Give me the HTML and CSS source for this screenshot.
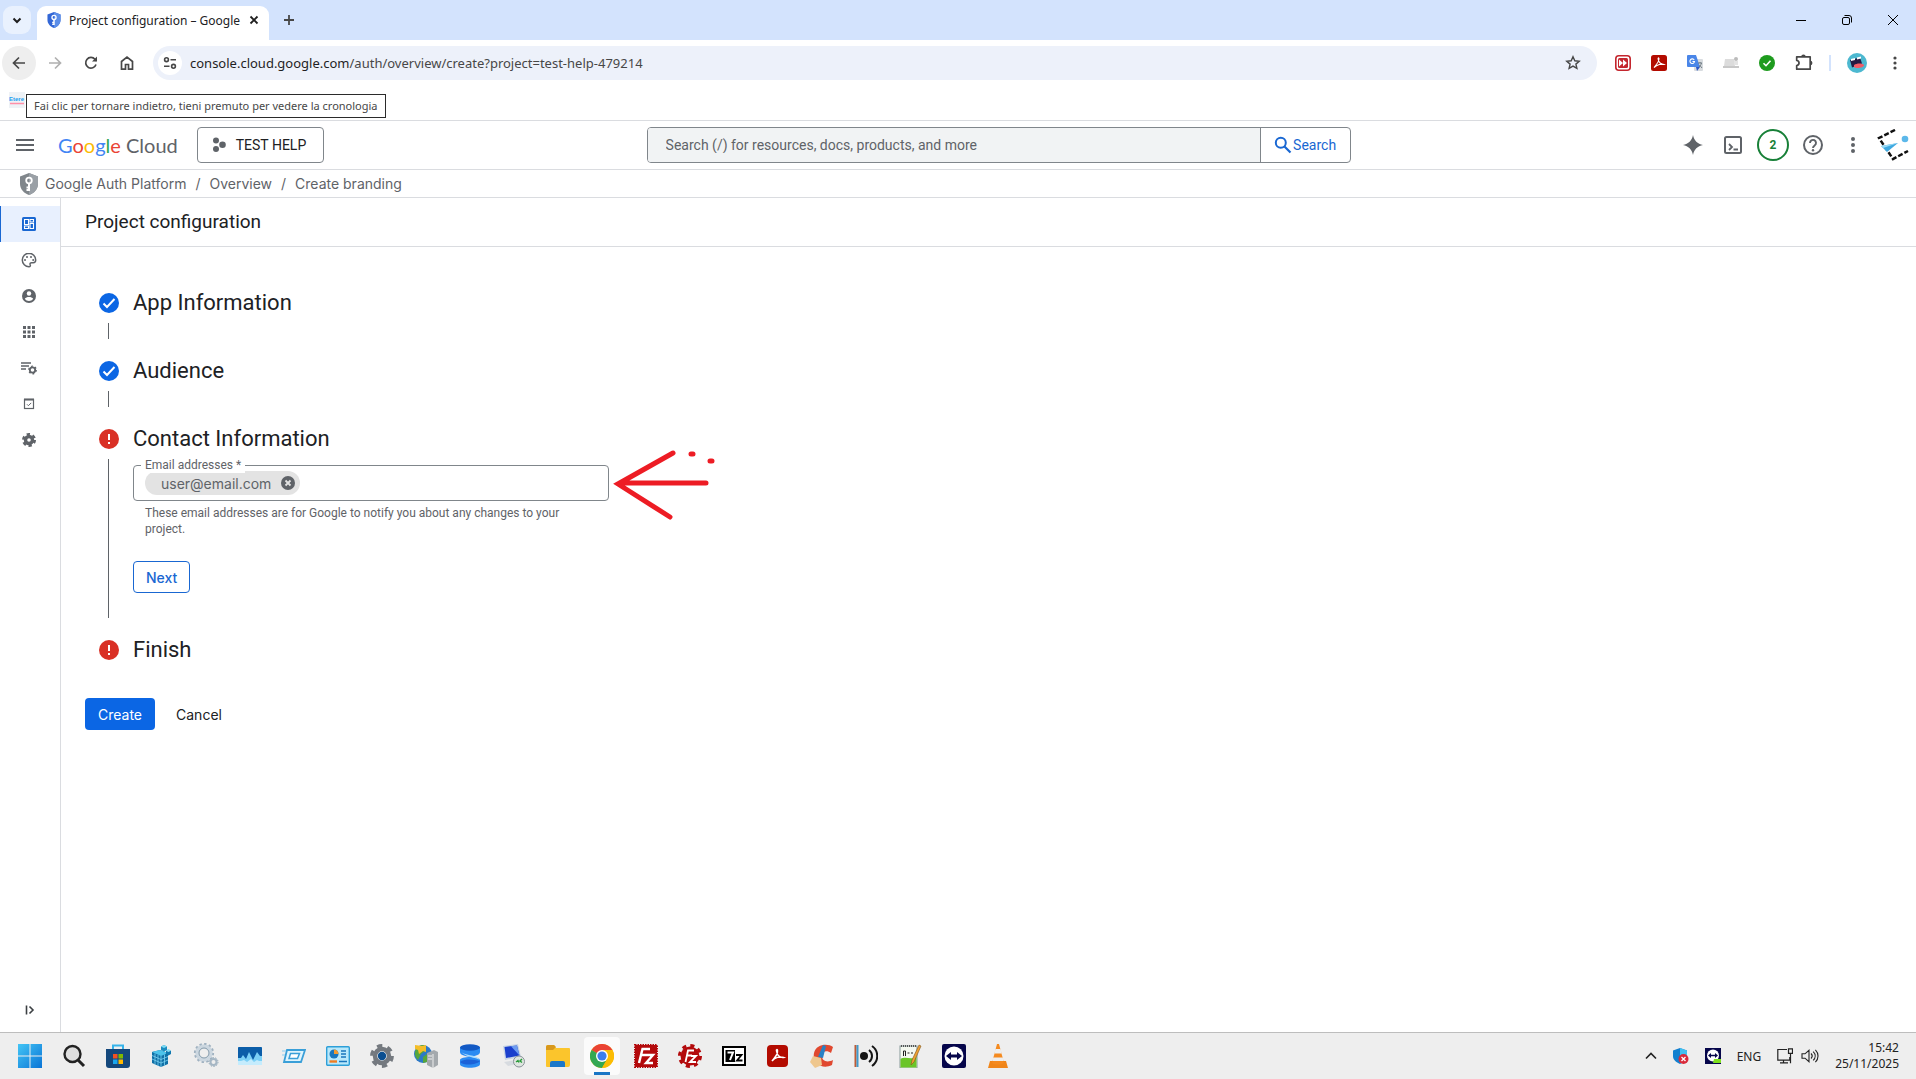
FILE: index.html
```html
<!DOCTYPE html>
<html lang="en">

<head>
    <meta charset="UTF-8">
    <meta name="viewport" content="width=device-width, initial-scale=1.0">
    <title>Project configuration</title>
    <link rel="stylesheet" href="styles.css">
</head>

<body>

    <!-- browser tabs -->
    <div class="tabstrip">
        <button class="tab-search" aria-label="Search tabs"><svg width="12" height="12" viewBox="0 0 12 12"><path d="M2.5 4.5 6 8l3.5-3.5" fill="none" stroke="#1f1f1f" stroke-width="2"/></svg></button>
        <div class="tab">
            <svg width="14" height="16" viewBox="0 0 18 22"><path d="M9 0l9 3.5V11c0 5-4 9.500-9 11-5-1.500-9-6-9-11V3.500z" fill="#3367d6"/><path d="M9 0l9 3.500V11c0 5-4 9.500-9 11z" fill="#5c8ee8"/><circle cx="9" cy="7.500" r="2.800" fill="none" stroke="#fff" stroke-width="1.800"/><path d="M9 10v8M9 14.500H6.500M9 17H6.500" stroke="#fff" stroke-width="2"/></svg>
            <span class="tab-title">Project configuration – Google</span>
            <button class="tab-close" aria-label="Close tab"><svg width="10" height="10" viewBox="0 0 10 10"><path d="M1.500 1.500l7 7M8.500 1.500l-7 7" stroke="#1f1f1f" stroke-width="1.800"/></svg></button>
        </div>
        <button class="tab-new" aria-label="New tab"><svg width="12" height="12" viewBox="0 0 12 12"><path d="M6 1v10M1 6h10" stroke="#474747" stroke-width="1.800"/></svg></button>
        <div class="window-buttons">
            <button aria-label="Minimize"><svg width="12" height="12" viewBox="0 0 12 12"><path d="M1 6.500h10" stroke="#000"/></svg></button>
            <button aria-label="Restore"><svg width="12" height="12" viewBox="0 0 12 12"><rect x="1.500" y="3.500" width="7" height="7" rx="1.500" fill="none" stroke="#000"/><path d="M3.500 1.500H8A2.500 2.500 0 0 1 10.500 4v4.500" fill="none" stroke="#000"/></svg></button>
            <button aria-label="Close"><svg width="12" height="12" viewBox="0 0 12 12"><path d="M1 1l10 10M11 1L1 11" stroke="#000"/></svg></button>
        </div>
    </div>

    <!-- address bar -->
    <div class="toolbar">
        <div class="nav-buttons">
            <button class="nav-button hovered" aria-label="Back" aria-describedby="back-tip"><svg width="16" height="16" viewBox="0 0 16 16"><path d="M14 8H3M8 2.500L2.500 8 8 13.500" fill="none" stroke="#474747" stroke-width="1.700"/></svg></button>
            <button class="nav-button" aria-label="Forward"><svg width="16" height="16" viewBox="0 0 16 16"><path d="M2 8h11M8 2.500L13.500 8 8 13.500" fill="none" stroke="#b0b0b0" stroke-width="1.700"/></svg></button>
            <button class="nav-button" aria-label="Reload"><svg width="16" height="16" viewBox="0 0 16 16"><path d="M13 9.500A5.300 5.300 0 1 1 12 4.300L13.500 6" fill="none" stroke="#474747" stroke-width="1.700"/><path d="M14 1.500v5H9z" fill="#474747"/></svg></button>
            <button class="nav-button" aria-label="Home"><svg width="16" height="16" viewBox="0 0 16 16"><path d="M2.500 14.200V6.500L8 2.200l5.500 4.300v7.700h-4V9.500h-3v4.700z" fill="none" stroke="#474747" stroke-width="1.700"/></svg></button>
        </div>
        <div class="omnibox">
            <span class="site-info"><svg width="14" height="14" viewBox="0 0 14 14"><g fill="none" stroke="#474747" stroke-width="1.600"><circle cx="3.500" cy="3.700" r="1.900"/><path d="M7.500 3.700H13M1 10.300h5.500"/><circle cx="10.500" cy="10.300" r="1.900"/></g></svg></span>
            <span class="url">console.cloud.google.com<span class="url-path">/auth/overview/create?project=test-help-479214</span></span>
            <svg width="16" height="16" viewBox="0 0 16 16"><path d="M8 1.800l1.800 4 4.400.4-3.300 2.900 1 4.300L8 11.100l-3.900 2.300 1-4.300L1.800 6.200l4.400-.4z" fill="none" stroke="#474747" stroke-width="1.400"/></svg>
        </div>
        <div class="extensions">
            <svg width="16" height="16" viewBox="0 0 16 16"><rect x=".8" y=".8" width="14.400" height="14.400" rx="3" fill="#fff" stroke="#c4262e" stroke-width="1.600"/><rect x="3" y="3" width="10" height="10" rx="1.500" fill="#c4262e"/><path d="M4 4.500L8 8l-4 3.500zM8 4.500L12 8l-4 3.500z" fill="#fff"/></svg>
            <svg width="16" height="16" viewBox="0 0 16 16"><rect width="16" height="16" rx="2.500" fill="#b30b00"/><path d="M3 12.500c2-3 5-5 5-8.500 0-1.500-1-1.500-.9 0C7.500 7 10 9.800 13 9.500 11 8.500 6 9.500 3 12.500z" fill="none" stroke="#fff" stroke-width="1.100"/></svg>
            <svg width="16" height="16" viewBox="0 0 16 16"><rect x="7" y="4" width="9" height="12" rx="1" fill="#d8dce0"/><path d="M1 0h8l4 12H1a1 1 0 0 1-1-1V1a1 1 0 0 1 1-1z" fill="#4a86e8"/><path d="M9 12h4l-3 4z" fill="#2a56c6"/><path d="M7.200 5A2.300 2.300 0 1 0 7.500 6.500H5.500" fill="none" stroke="#fff" stroke-width="1.100"/><path d="M11 8h4M13 7v1M14.500 8c-.5 2-1.500 3-2.500 4M12.500 10l2.500 3" stroke="#68737c" stroke-width=".9" fill="none"/></svg>
            <svg width="16" height="16" viewBox="0 0 16 16"><path d="M2 4h9l1 7H1z" fill="#dcdcdc"/><path d="M0 11h16v2H0z" fill="#c8c8c8"/><path d="M11 6h4v4h-4z" fill="#e4e4e4"/><circle cx="13" cy="4" r="2" fill="#bbb"/></svg>
            <svg width="16" height="16" viewBox="0 0 16 16"><circle cx="8" cy="8" r="8" fill="#1e9b1e"/><path d="M4.500 8.200L7 10.700l4.500-5" fill="none" stroke="#fff" stroke-width="1.600"/></svg>
            <svg width="18" height="18" viewBox="0 0 16 16"><path d="M1.500 2.500h12v11h-12v-3.300c2.800-.4 2.800-4 0-4.400z" fill="none" stroke="#474747" stroke-width="1.500" stroke-linejoin="round"/><path d="M5.500 2.500a2 2 0 0 1 4 0zM13.500 6a2 2 0 0 1 0 4z" fill="#474747"/></svg>
            <span class="separator"></span>
            <svg width="20" height="20" viewBox="0 0 20 20"><circle cx="10" cy="10" r="10" fill="#4cb8d0"/><path d="M3 7l10-2.500 2 6-10 4z" fill="#231942"/><path d="M4 6l4-1v2L4 8zM10 4.500l4-1v2l-4 1z" fill="#fff"/><path d="M7 12c3-2 8-2 10 0 0 3-8 4-10 2z" fill="#f05a66"/></svg>
            <button class="icon-button" aria-label="Browser menu"><svg width="16" height="16" viewBox="0 0 16 16"><g fill="#474747"><circle cx="8" cy="3" r="1.600"/><circle cx="8" cy="8" r="1.600"/><circle cx="8" cy="13" r="1.600"/></g></svg></button>
        </div>
    </div>

    <!-- bookmarks -->
    <div class="bookmarks">
        <a class="bookmark" href="#" aria-label="Etere"><svg width="16" height="16" viewBox="0 0 16 16"><rect width="16" height="16" fill="#eef2f6"/><text x="0" y="9" class="bookmark-text">Etere</text><path d="M1 11.500h14" stroke="#ff8fa8" stroke-width="1.500"/></svg></a>
        <div class="tooltip" id="back-tip" role="tooltip">Fai clic per tornare indietro, tieni premuto per vedere la cronologia</div>
    </div>

    <!-- cloud console header -->
    <header class="header">
        <div class="header-left">
            <button class="icon-button" aria-label="Navigation menu"><svg width="18" height="12" viewBox="0 0 18 12"><path d="M0 1h18M0 6h18M0 11h18" stroke="#5f6368" stroke-width="2"/></svg></button>
            <a class="logo" href="#"><span class="g-blue">G</span><span class="g-red">o</span><span class="g-yellow">o</span><span class="g-blue">g</span><span class="g-green">l</span><span class="g-red">e</span> Cloud</a>
            <button class="project-button"><svg width="14" height="16" viewBox="0 0 14 16"><g fill="#5f6368"><circle cx="4" cy="3.500" r="3"/><circle cx="4" cy="12" r="3"/><circle cx="10.500" cy="7.700" r="3.300"/></g></svg>TEST HELP</button>
        </div>
        <form class="search">
            <input type="text" class="search-input" aria-label="Search" placeholder="Search (/) for resources, docs, products, and more">
            <button type="button" class="search-button"><svg width="18" height="18" viewBox="0 0 18 18"><circle cx="6.800" cy="6.800" r="5" fill="none" stroke="#1967d2" stroke-width="2"/><path d="M10.500 10.500l6 6" stroke="#1967d2" stroke-width="2.200"/></svg>Search</button>
        </form>
        <div class="header-right">
            <button class="icon-button" aria-label="Gemini"><svg width="20" height="20" viewBox="0 0 20 20"><path d="M10 0c1 5.500 4.500 9 10 10-5.500 1-9 4.500-10 10-1-5.500-4.500-9-10-10 5.500-1 9-4.500 10-10z" fill="#5f6368"/></svg></button>
            <button class="icon-button" aria-label="Cloud Shell"><svg width="18" height="18" viewBox="0 0 18 18"><rect x="1" y="1" width="16" height="16" rx="1.500" fill="none" stroke="#5f6368" stroke-width="2"/><path d="M5 8l3 3-3 3M9.500 13.500H14" fill="none" stroke="#5f6368" stroke-width="1.800"/></svg></button>
            <button class="notifications" aria-label="Notifications">2</button>
            <button class="icon-button" aria-label="Help"><svg width="20" height="20" viewBox="0 0 20 20"><circle cx="10" cy="10" r="9" fill="none" stroke="#5f6368" stroke-width="2"/><path d="M7 8a3 3 0 1 1 4.800 2.300C10.600 11.200 10 11.600 10 13" fill="none" stroke="#5f6368" stroke-width="1.900"/><circle cx="10" cy="15.300" r="1.200" fill="#5f6368"/></svg></button>
            <button class="icon-button" aria-label="More options"><svg width="18" height="18" viewBox="0 0 18 18"><g fill="#5f6368"><circle cx="9" cy="3" r="2"/><circle cx="9" cy="9" r="2"/><circle cx="9" cy="15" r="2"/></g></svg></button>
            <button class="icon-button" aria-label="Account"><svg width="32" height="32" viewBox="0 0 32 32"><path d="M18 1L2 9l14 21 15-8" fill="none" stroke="#111" stroke-width="2.500" stroke-dasharray="5 2"/><path d="M4 17l17-3-11 9z" fill="#3fa9e0"/><path d="M4 17l17-3-15 5z" fill="#9bdcf7"/><circle cx="28" cy="10" r="3.300" fill="#5cb8ea"/></svg></button>
        </div>
    </header>

    <nav class="breadcrumb">
        <svg width="18" height="22" viewBox="0 0 18 22"><path d="M9 0l9 3.500V11c0 5-4 9.500-9 11-5-1.500-9-6-9-11V3.500z" fill="#80868b"/><path d="M9 0l9 3.500V11c0 5-4 9.500-9 11z" fill="#9aa0a6"/><circle cx="9" cy="7.500" r="2.800" fill="none" stroke="#fff" stroke-width="1.800"/><path d="M9 10v8M9 14.500H6.500M9 17H6.500" stroke="#fff" stroke-width="2"/></svg>
        <a href="#">Google Auth Platform</a>
        <span>/</span>
        <a href="#">Overview</a>
        <span>/</span>
        <a href="#">Create branding</a>
    </nav>

    <div class="layout">
        <aside class="sidebar">
            <a class="side-item active" href="#" aria-label="Overview"><svg width="14" height="14" viewBox="0 0 14 14"><rect width="14" height="14" rx="1.500" fill="#1967d2"/><path d="M2.500 2.500h4v5h-4zM8 2.500h3.500v2.500H8zM2.500 9h4v2.500h-4zM8 6.500h3.500v5H8z" fill="none" stroke="#fff" stroke-width="1.100"/></svg></a>
            <a class="side-item" href="#" aria-label="Branding"><svg width="16" height="16" viewBox="0 0 16 16"><path d="M8 1.300a6.700 6.700 0 1 0 0 13.400c1.200 0 1.600-1 1.200-1.900-.5-1.200.2-2.100 1.400-2.100h1.600c1.500 0 2.500-1 2.500-2.700C14.700 4.200 11.700 1.300 8 1.300z" fill="none" stroke="#5f6368" stroke-width="1.500"/><g fill="#5f6368"><circle cx="4" cy="8" r="1"/><circle cx="6" cy="5" r="1"/><circle cx="10" cy="5" r="1"/><circle cx="12.200" cy="8" r="1"/></g></svg></a>
            <a class="side-item" href="#" aria-label="Audience"><svg width="14" height="14" viewBox="0 0 14 14"><circle cx="7" cy="7" r="7" fill="#5f6368"/><circle cx="7" cy="4.500" r="2.200" fill="#fff"/><path d="M2.800 9.800c1.500-2.400 6.900-2.400 8.400 0-2 3-6.400 3-8.400 0z" fill="#fff"/></svg></a>
            <a class="side-item" href="#" aria-label="Clients"><svg width="12" height="12" viewBox="0 0 12 12"><path d="M0 0h3v3H0zM4.500 0h3v3h-3zM9 0h3v3H9zM0 4.500h3v3H0zM4.500 4.500h3v3h-3zM9 4.500h3v3H9zM0 9h3v3H0zM4.500 9h3v3h-3zM9 9h3v3H9z" fill="#5f6368"/></svg></a>
            <a class="side-item" href="#" aria-label="Data access"><svg width="16" height="14" viewBox="0 0 16 14"><path d="M0 2h10M0 5h8M0 8h5" stroke="#5f6368" stroke-width="1.400"/><circle cx="11.500" cy="9" r="2.700" fill="none" stroke="#5f6368" stroke-width="1.800"/><circle cx="11.500" cy="9" r="3.800" fill="none" stroke="#5f6368" stroke-width="1.200" stroke-dasharray="1.900 2.080"/></svg></a>
            <a class="side-item" href="#" aria-label="Verification center"><svg width="12" height="12" viewBox="0 0 12 12"><rect x="1.500" y="1.500" width="9" height="9" fill="none" stroke="#5f6368" stroke-width="1.200"/><path d="M1 1.500h10" stroke="#5f6368" stroke-width="2"/><path d="M4 6.300L5.400 7.700 8.200 4.900" fill="none" stroke="#5f6368"/></svg></a>
            <a class="side-item" href="#" aria-label="Settings"><svg width="14" height="14" viewBox="0 0 14 14"><circle cx="7" cy="7" r="3.500" fill="none" stroke="#5f6368" stroke-width="3.400"/><circle cx="7" cy="7" r="5.800" fill="none" stroke="#5f6368" stroke-width="2.400" stroke-dasharray="3.300 2.774"/></svg></a>
            <button class="side-expand" aria-label="Expand menu"><svg width="10" height="10" viewBox="0 0 10 10"><path d="M1.500 .5v9M4.500 1.500L8 5 4.500 8.500" fill="none" stroke="#3c4043" stroke-width="1.600"/></svg></button>
        </aside>

        <main class="content">
            <h1 class="page-title">Project configuration</h1>

            <div class="stepper">
                <section class="step">
                    <div class="step-rail">
                        <svg width="20" height="20" viewBox="0 0 20 20"><circle cx="10" cy="10" r="10" fill="#0b66e4"/><path d="M4.500 10.500L8 14l7.500-8" fill="none" stroke="#fff" stroke-width="2"/></svg>
                        <span class="step-line"></span>
                    </div>
                    <h2>App Information</h2>
                </section>
                <section class="step">
                    <div class="step-rail">
                        <svg width="20" height="20" viewBox="0 0 20 20"><circle cx="10" cy="10" r="10" fill="#0b66e4"/><path d="M4.500 10.500L8 14l7.500-8" fill="none" stroke="#fff" stroke-width="2"/></svg>
                        <span class="step-line"></span>
                    </div>
                    <h2>Audience</h2>
                </section>
                <section class="step">
                    <div class="step-rail">
                        <svg width="20" height="20" viewBox="0 0 20 20"><circle cx="10" cy="10" r="10" fill="#d93025"/><path d="M10 5v6M10 13v2" stroke="#fff" stroke-width="2"/></svg>
                        <span class="step-line"></span>
                    </div>
                    <div class="step-body">
                        <h2>Contact Information</h2>
                        <div class="field">
                            <label for="emails">Email addresses *</label>
                            <span class="chip">user@email.com<button aria-label="Remove user@email.com"><svg width="14" height="14" viewBox="0 0 14 14"><circle cx="7" cy="7" r="7" fill="#5f6368"/><path d="M4.500 4.500l5 5M9.500 4.500l-5 5" stroke="#e3e3e3" stroke-width="1.800"/></svg></button></span>
                            <input type="text" id="emails">
                            <!-- hand drawn arrow pointing at the field -->
                            <svg class="arrow" width="106" height="74" viewBox="0 0 106 74"><g fill="none" stroke="#ed1c24" stroke-width="5" stroke-linecap="round"><path d="M63 6L8 37l52 33M10 36h86"/><path d="M81 7h2M100 14h2"/></g></svg>
                        </div>
                        <p class="hint">These email addresses are for Google to notify you about any changes to your project.</p>
                        <button class="button outlined">Next</button>
                    </div>
                </section>
                <section class="step">
                    <div class="step-rail">
                        <svg width="20" height="20" viewBox="0 0 20 20"><circle cx="10" cy="10" r="10" fill="#d93025"/><path d="M10 5v6M10 13v2" stroke="#fff" stroke-width="2"/></svg>
                    </div>
                    <h2>Finish</h2>
                </section>
            </div>

            <div class="actions">
                <button class="button primary">Create</button>
                <button class="button text">Cancel</button>
            </div>
        </main>
    </div>

    <!-- windows taskbar -->
    <footer class="taskbar">
        <div class="apps">
            <button aria-label="Start"><svg width="24" height="24" viewBox="0 0 24 24"><defs><linearGradient id="win" x1="0" y1="0" x2="1" y2="1"><stop offset="0" stop-color="#43c5f5"/><stop offset="1" stop-color="#0a74d6"/></linearGradient></defs><path d="M0 0h11.500v11.500H0zM12.500 0H24v11.500H12.500zM0 12.500h11.500V24H0zM12.500 12.500H24V24H12.500z" fill="url(#win)"/></svg></button>
            <button aria-label="Search"><svg width="24" height="24" viewBox="0 0 24 24"><circle cx="10.500" cy="10" r="8" fill="#dedede" stroke="#222" stroke-width="2.400"/><path d="M16 16l6 6" stroke="#222" stroke-width="3"/></svg></button>
            <button aria-label="Store"><svg width="24" height="24" viewBox="0 0 24 24"><path d="M7 6V1.500h10V6" fill="none" stroke="#35b3ea" stroke-width="2"/><path d="M0 5h24v16a3 3 0 0 1-3 3H3a3 3 0 0 1-3-3z" fill="#14487c"/><path d="M7 10h4.500v4.500H7z" fill="#f25022"/><path d="M12.500 10H17v4.500h-4.500z" fill="#7fba00"/><path d="M7 15.500h4.500V20H7z" fill="#1ba7ee"/><path d="M12.500 15.500H17V20h-4.500z" fill="#ffb900"/></svg></button>
            <button aria-label="Registry Editor"><svg width="24" height="24" viewBox="0 0 24 24"><path d="M2 8l8-2 8 3v11l-7 3-9-4z" fill="#0f6fa6"/><path d="M2 8l8-2 8 3-7 3z" fill="#4dc3ea"/><path d="M11 12v11M2 11.500l9 4 7-3M2 15l9 4 7-3M5 9.500v11M8 11v11M14.500 10.500v11" stroke="#7bd3f2" stroke-width=".8" fill="none"/><path d="M11 2.500l3-1.500 3 1.500V6l-3 1.500L11 6z" fill="#1c8dc0"/><path d="M11 2.500l3-1.500 3 1.500-3 1.500zM16 6.500L18.500 5 21 6.500 18.500 8z" fill="#7bdcf5"/><path d="M16 6.500l2.500 1.500L21 6.500V10l-2.500 1.500L16 10z" fill="#1178b0"/></svg></button>
            <button aria-label="Services"><svg width="26" height="26" viewBox="0 0 26 26"><circle cx="11" cy="10" r="7" fill="none" stroke="#ccd7e0" stroke-width="3.600"/><circle cx="11" cy="10" r="9.200" fill="none" stroke="#9fb1c0" stroke-width="1.800" stroke-dasharray="2.400 2.400"/><circle cx="11" cy="10" r="5" fill="none" stroke="#8098aa"/><circle cx="20.500" cy="19" r="3" fill="none" stroke="#a5b6c4" stroke-width="2"/><circle cx="20.500" cy="19" r="4.500" fill="none" stroke="#93a8b8" stroke-dasharray="1.500 1.300"/></svg></button>
            <button aria-label="Task monitor"><svg width="24" height="18" viewBox="0 0 24 18"><rect width="24" height="18" rx="1" fill="#7cd0f6"/><path d="M0 1a1 1 0 0 1 1-1h22a1 1 0 0 1 1 1v8h-2l-3-4-4 8-4-8-3 7-3-4-2 3H0z" fill="#0b5da8"/><path d="M0 14h3l3-1 3 2 4-3 3 3 3-2 2 1h3v4H0z" fill="#c5ecfd"/></svg></button>
            <button aria-label="Run"><svg width="24" height="24" viewBox="0 0 24 24"><path d="M5 6h18l-4 12H2z" fill="#dff4fd" stroke="#3a9fd8" stroke-width="1.800"/><path d="M8.500 9.500h9l-2 5H7z" fill="#fff" stroke="#3a9fd8" stroke-width="1.500"/><path d="M0 7h4M0 11h3" stroke="#8acdf0"/></svg></button>
            <button aria-label="Control Panel"><svg width="24" height="20" viewBox="0 0 24 20"><rect x=".7" y=".7" width="22.600" height="18.600" rx="1" fill="#b8e8fb" stroke="#2d9fd8" stroke-width="1.400"/><circle cx="8" cy="8" r="4.500" fill="#1976bd"/><path d="M8 8V3.500A4.500 4.500 0 0 1 12.500 8z" fill="#f39a2e"/><path d="M3.500 15.500H11" stroke="#ef7d22" stroke-width="2.400"/><path d="M13 15.500h8M15 5h5M15 8h5M15 11h5" stroke="#1976bd" stroke-width="1.500"/></svg></button>
            <button aria-label="Settings"><svg width="24" height="24" viewBox="0 0 24 24"><circle cx="12" cy="12" r="7" fill="#fff" stroke="#74797f" stroke-width="4.500"/><circle cx="12" cy="12" r="10.200" fill="none" stroke="#74797f" stroke-width="3.400" stroke-dasharray="5.340 5.340"/><circle cx="12" cy="12" r="4.200" fill="#0b4f91"/></svg></button>
            <button aria-label="IIS Manager"><svg width="24" height="24" viewBox="0 0 24 24"><circle cx="9" cy="10" r="9" fill="#2d79c7"/><path d="M2 5c3-4 6-4 8-4l2 5-5 4-3 6C1 13 0 9 2 5zM9 13l4-3v8l-4 1z" fill="#56a63b"/><path d="M1 1l7 1 4-1v7l-3-1-4 3-1-4-3-1z" fill="#f4bd28"/><path d="M13 9l7-3 4 2v13l-5 3-6-3z" fill="#a4a9ad"/><path d="M19 10v14M14 12h4M14 15h4" stroke="#eee"/></svg></button>
            <button aria-label="Database"><svg width="24" height="24" viewBox="0 0 24 24"><path d="M2 3v5c0 3 5 4 10 5-5 0-10 1-10 3v4c0 5 20 5 20 0v-4c0-2-5-3-10-3 5-1 10-2 10-5V3z" fill="#2b8bf2"/><ellipse cx="12" cy="3.500" rx="10" ry="3.200" fill="#1259c4"/><path d="M2 7c4 5 16 3 20 9-5-3-13-2-20-9z" fill="#a9dcff"/><path d="M2 18c6-4 14-2 20-1-3 4-16 5-20 1z" fill="#1c62d8"/></svg></button>
            <button aria-label="Remote Desktop"><svg width="24" height="24" viewBox="0 0 24 24"><path d="M1 2l15-2 3 13-16 3z" fill="#c6d4e5"/><path d="M2.500 3l12.500-1.500 2.500 10L4 14z" fill="#1a3fcd"/><path d="M9 2.300L15 1.500l2.500 10z" fill="#6d9cf0"/><path d="M2 18l12-2 2 4-10 2z" fill="#d7dbe0"/><circle cx="17" cy="17.500" r="5.500" fill="#dfe5e0" stroke="#8a9299"/><path d="M14 18l2-1.500 1 2M20 15l-2 2 2 1.500" stroke="#299b39" fill="none" stroke-width="1.400"/></svg></button>
            <button aria-label="File Explorer"><svg width="24" height="22" viewBox="0 0 24 22"><path d="M0 2a2 2 0 0 1 2-2h6l2 3h13a1 1 0 0 1 1 1v16a2 2 0 0 1-2 2H1a1 1 0 0 1-1-1z" fill="#fbc52c"/><path d="M0 5V2a2 2 0 0 1 2-2h6l2 2-3 3z" fill="#d8981c"/><path d="M4 22v-4a2 2 0 0 1 2-2h11a2 2 0 0 1 2 2v4z" fill="#1a77c9"/></svg></button>
            <button class="running" aria-label="Google Chrome"><svg width="24" height="24" viewBox="0 0 24 24"><circle cx="12" cy="12" r="12" fill="#fbbc04"/><path d="M12 12L1.600 6A12 12 0 0 1 22.400 6z" fill="#ea4335"/><path d="M1.600 6A12 12 0 0 0 12 24l5.200-9L12 12z" fill="#34a853"/><path d="M12 6h10.400A12 12 0 0 1 12 24l5.200-9z" fill="#fbbc04"/><circle cx="12" cy="12" r="6" fill="#fff"/><circle cx="12" cy="12" r="4.600" fill="#3b7ded"/></svg></button>
            <button aria-label="FileZilla"><svg width="24" height="24" viewBox="0 0 24 24"><rect x="1" y="1" width="22" height="22" fill="#b3090b" stroke="#b3090b" stroke-width="2" stroke-dasharray="1.500 1"/><path d="M5 19L8.500 5H16M7 11h6.500M13 11h6l-7 8h7" fill="none" stroke="#fff" stroke-width="2.400"/></svg></button>
            <button aria-label="FileZilla Server"><svg width="24" height="24" viewBox="0 0 24 24"><circle cx="12" cy="12" r="9.500" fill="#b3090b"/><circle cx="12" cy="12" r="10.500" fill="none" stroke="#b3090b" stroke-width="3" stroke-dasharray="4.123 4.123"/><path d="M7.500 18L10 6.500h6M9 11.500h5M13 12h5l-6 6h6" fill="none" stroke="#fff" stroke-width="1.800"/></svg></button>
            <button aria-label="7-Zip"><svg width="24" height="20" viewBox="0 0 24 20"><rect x="1" y="1" width="22" height="18" fill="#fff" stroke="#000" stroke-width="2"/><path d="M3.500 4H13v12H3.500z"/><path d="M5.500 6.500H11L8 14" fill="none" stroke="#fff" stroke-width="2"/><path d="M14 9h5.500L15 14.500h5.500" fill="none" stroke="#000" stroke-width="1.800"/></svg></button>
            <button aria-label="Acrobat Reader"><svg width="22" height="24" viewBox="0 0 22 24"><rect y="1" width="21" height="22" rx="4" fill="#b30b00"/><path d="M5 17c3-4 6-6 5.500-10.500 0-1.500-1.500-1-1 .5C10 11 13 14 16.500 13.500 13 12 8 13.500 5 17z" fill="none" stroke="#fff" stroke-width="1.500"/></svg></button>
            <button aria-label="CCleaner"><svg width="24" height="24" viewBox="0 0 24 24"><path d="M23 3C18-1 6 0 4 9c-2 10 8 17 18 12l1-5c-6 3-11 1-11-4s5-6 9-3z" fill="#e0482f"/><path d="M13 1l3 1-3 12-5-1z" fill="#2780c4"/><path d="M3 12l8 2 1 7-7 3-5-6z" fill="#efc78e"/></svg></button>
            <button aria-label="Audio stream"><svg width="24" height="24" viewBox="0 0 24 24"><path d="M1.500 1v22" stroke="#bd5b35" stroke-width="2"/><path d="M3.500 1v22" stroke="#3f9acb" stroke-width="2"/><circle cx="10" cy="12" r="4" fill="#151515"/><path d="M15 6c4 3 4 9 0 12M18 2c7 5 7 15 0 20" fill="none" stroke="#151515" stroke-width="2"/></svg></button>
            <button aria-label="Notepad++"><svg width="24" height="24" viewBox="0 0 24 24"><rect x="2" y="2" width="17" height="22" fill="#f4f8f0" stroke="#899"/><path d="M2.500 15c5-3 10 1 16-2v10.500h-16z" fill="#6bc528"/><path d="M3 2h16" stroke="#555" stroke-width="2" stroke-dasharray="1 1"/><path d="M5.500 12V7h2v5M9.500 9h2M13 9h2" stroke="#222" fill="none"/><path d="M21 1l2 1-7 16-3 3 1-5z" fill="#efa032" stroke="#80571c" stroke-width=".6"/></svg></button>
            <button aria-label="TeamViewer"><svg width="24" height="24" viewBox="0 0 24 24"><rect width="24" height="24" rx="2" fill="#06064b"/><circle cx="12" cy="12" r="9.500" fill="#fff"/><path d="M4 12l5-4v2.500h6V8l5 4-5 4v-2.500H9V16z" fill="#06064b"/></svg></button>
            <button aria-label="VLC"><svg width="24" height="24" viewBox="0 0 24 24"><path d="M4 17h16l2 7H2z" fill="#f08519"/><path d="M11 0h2l5 19c-3 2-9 2-12 0z" fill="#f58a1f"/><path d="M9.500 5h5l1.300 4.500H8.200zM7.300 13.500h9.400l1 3.500H6.300z" fill="#eee"/></svg></button>
        </div>
        <div class="tray">
            <svg width="12" height="12" viewBox="0 0 12 12"><path d="M1 8.500l5-5 5 5" fill="none" stroke="#222" stroke-width="1.600"/></svg>
            <svg width="16" height="16" viewBox="0 0 16 16"><path d="M7 0l7 2.500V8c0 4-3 6-7 8-4-2-7-4-7-8V2.500z" fill="#1380cf"/><path d="M7 0l7 2.500V8H7z" fill="#42bff0"/><circle cx="10.500" cy="11" r="5" fill="#d92a3a"/><path d="M8.500 9l4 4M12.500 9l-4 4" stroke="#fff" stroke-width="1.300"/></svg>
            <svg width="16" height="16" viewBox="0 0 16 16"><rect width="16" height="16" fill="#06064b"/><circle cx="8" cy="7.500" r="6" fill="#fff"/><path d="M3 7.500l3-2.500v1.700h4V5l3 2.500-3 2.500V8.300H6V10z" fill="#06064b"/><path d="M9 11h7v4H8z" fill="#7ee01e"/></svg>
            <span class="language">ENG</span>
            <span class="tray-icons">
                <svg width="16" height="16" viewBox="0 0 16 16"><path d="M10 1.500H.8v10.700h12V9M6.500 12v2.700M3 14.800h8" fill="none" stroke="#222" stroke-width="1.200"/><path d="M11.500.8h4v4.500h-4zM13.500 5.300v10" fill="none" stroke="#222" stroke-width="1.200"/></svg>
                <svg width="18" height="16" viewBox="0 0 18 16"><path d="M1 5.800h3l4-3.500v11.400l-4-3.500H1zM10 5.500c1.500 1.500 1.500 3.500 0 5M12.200 3.600c2.600 2.600 2.600 6.200 0 8.800M14.400 1.800c3.500 3.600 3.500 8.800 0 12.400" fill="none" stroke="#222" stroke-width="1.100"/></svg>
            </span>
            <span class="clock">15:42<br>25/11/2025</span>
        </div>
    </footer>

</body>

</html>
```

FILE: styles.css
```css
* {
    box-sizing: border-box;
}

body {
    display: flex;
    flex-direction: column;
    min-height: 100vh;
    margin: 0;
    background-color: #fff;
    color: #202124;
    font-family: Roboto, sans-serif;
    font-size: 14px;
}

button {
    display: flex;
    align-items: center;
    justify-content: center;
    padding: 0;
    border: none;
    background: none;
    font: inherit;
    color: inherit;
}

a {
    color: inherit;
    text-decoration: none;
}

svg {
    display: block;
    flex-shrink: 0;
}

/* browser chrome */
.tabstrip {
    display: flex;
    align-items: center;
    height: 40px;
    padding-left: 3px;
    background-color: #d3e3fd;
    font-family: "Noto Sans", sans-serif;
    font-size: 12px;
}

.tab-search {
    width: 28px;
    height: 28px;
    border-radius: 9px;
    background-color: #e9f1fe;
}

.tab {
    display: flex;
    align-items: center;
    align-self: flex-end;
    gap: 8px;
    width: 232px;
    height: 34px;
    margin-left: 6px;
    padding: 0 10px;
    padding-bottom: 2px;
    border-radius: 9px 9px 0 0;
    background-color: #fff;
}

.tab > * {
    margin-bottom: 4px;
}

.tab-title {
    flex: 1;
    white-space: nowrap;
}

.tab-close {
    width: 12px;
    height: 12px;
}

.tab-new {
    width: 28px;
    height: 28px;
    margin-left: 6px;
}

.window-buttons {
    display: flex;
    margin-left: auto;
}

.window-buttons button {
    width: 46px;
    height: 40px;
}

.toolbar {
    display: flex;
    align-items: center;
    height: 46px;
    padding: 0 13px 0 2px;
}

.nav-buttons {
    display: flex;
    gap: 2px;
    margin-right: 9px;
}

.nav-button {
    width: 34px;
    height: 34px;
    border-radius: 50%;
}

.nav-button.hovered {
    background-color: #eee;
}

.omnibox {
    display: flex;
    align-items: center;
    flex: 1;
    height: 34px;
    padding: 0 16px 0 5px;
    border-radius: 17px;
    background-color: #edf1fa;
}

.site-info {
    display: flex;
    align-items: center;
    justify-content: center;
    width: 24px;
    height: 24px;
    border-radius: 50%;
    background-color: #fff;
}

.url {
    flex: 1;
    margin-left: 8px;
    font-family: "Noto Sans", sans-serif;
    font-size: 13px;
    color: #1f1f1f;
}

.url-path {
    color: #474747;
}

.extensions {
    display: flex;
    align-items: center;
    gap: 20px;
    margin-left: 18px;
}

.separator {
    width: 2px;
    height: 16px;
    margin: 0 -4px;
    background-color: #d3e3fd;
}

.bookmarks {
    display: flex;
    height: 35px;
    padding-left: 9px;
    border-bottom: 1px solid #dadce0;
}

.bookmark {
    padding-top: 6px;
}

.bookmark-text {
    font-family: "Liberation Sans", sans-serif;
    font-size: 6px;
    font-weight: 700;
    fill: #22a0f0;
}

.tooltip {
    align-self: flex-start;
    margin-top: 8px;
    margin-left: 1px;
    padding: 0 7px;
    border: 1px solid #2b2b2b;
    background-color: #fff;
    font-family: "Noto Sans", sans-serif;
    font-size: 11px;
    line-height: 22px;
    color: #474747;
}

/* console header */
.header {
    display: flex;
    align-items: center;
    justify-content: space-between;
    height: 49px;
    padding: 0 3px 0 16px;
    border-bottom: 1px solid #dadce0;
}

.header-left,
.header-right {
    display: flex;
    align-items: center;
}

.header-right .icon-button {
    width: 40px;
    height: 40px;
}

.logo {
    margin-left: 24px;
    font-family: Lato, sans-serif;
    font-size: 20px;
    color: #5f6368;
}

.g-blue {
    color: #4285f4;
}

.g-red {
    color: #ea4335;
}

.g-yellow {
    color: #fbbc04;
}

.g-green {
    color: #34a853;
}

.project-button {
    gap: 10px;
    height: 36px;
    margin-left: 19px;
    padding: 0 17px 0 14px;
    border: 1px solid #80868b;
    border-radius: 4px;
}

.search {
    display: flex;
    width: 704px;
    height: 36px;
    border: 1px solid #80868b;
    border-radius: 4px;
}

.search-input {
    flex: 1;
    padding: 0 18px;
    border: none;
    border-right: 1px solid #80868b;
    border-radius: 3px 0 0 3px;
    background-color: #f1f3f4;
    font: inherit;
}

.search-input::placeholder {
    color: #5f6368;
}

.search-button {
    gap: 1px;
    width: 89px;
    color: #1967d2;
}

.notifications {
    width: 32px;
    height: 32px;
    margin: 0 4px;
    border: 2px solid #188038;
    border-radius: 50%;
    font-size: 12px;
    font-weight: 700;
    color: #188038;
}

.breadcrumb {
    display: flex;
    align-items: center;
    gap: 7px;
    height: 28px;
    padding-left: 20px;
    border-bottom: 1px solid #dadce0;
    font-family: Inter, sans-serif;
    color: #5f6368;
}

.breadcrumb span {
    padding: 0 2px;
}

/* page */
.layout {
    display: flex;
    flex: 1;
}

.sidebar {
    display: flex;
    flex-direction: column;
    width: 61px;
    padding-top: 8px;
    border-right: 1px solid #dadce0;
}

.side-item {
    display: flex;
    align-items: center;
    justify-content: center;
    height: 36px;
    padding-right: 2px;
}

.side-item.active {
    background-color: #e8f0fe;
    box-shadow: inset 1px 0 #1967d2;
}

.side-expand {
    width: 59px;
    height: 44px;
    margin-top: auto;
}

.content {
    flex: 1;
}

.page-title {
    margin: 0;
    padding-left: 24px;
    border-bottom: 1px solid #dadce0;
    font-size: 19px;
    font-weight: 400;
    line-height: 48px;
}

.stepper {
    padding: 40px 0 0 38px;
}

.step {
    display: flex;
    gap: 14px;
    min-height: 68px;
}

.step:last-child {
    min-height: 64px;
}

.step-rail {
    display: flex;
    flex-direction: column;
    align-items: center;
    width: 20px;
    padding-top: 6px;
}

.step-line {
    flex: 1;
    width: 1px;
    margin: 10px 1px 16px 0;
    background-color: #5f6368;
}

.step h2 {
    margin: 0;
    font-size: 22px;
    font-weight: 400;
    line-height: 32px;
}

.step-body {
    width: 476px;
}

.field {
    position: relative;
    display: flex;
    align-items: center;
    height: 36px;
    margin-top: 10px;
    padding: 0 11px;
    border: 1px solid #80868b;
    border-radius: 4px;
}

.field label {
    position: absolute;
    top: -9px;
    left: 7px;
    padding: 0 4px;
    background-color: #fff;
    font-size: 12px;
    line-height: 16px;
    color: #5f6368;
}

.field input {
    flex: 1;
    min-width: 0;
    border: none;
    outline: none;
    background: none;
    font: inherit;
}

.chip {
    display: flex;
    align-items: center;
    gap: 10px;
    height: 24px;
    padding: 0 5px 0 16px;
    border-radius: 12px;
    background-color: #e3e3e3;
    font-family: Inter, sans-serif;
    color: #5f6368;
}

.arrow {
    position: absolute;
    top: -19px;
    left: 476px;
}

.hint {
    margin: 4px 36px 24px 12px;
    font-size: 12px;
    line-height: 16px;
    color: #5f6368;
}

.button {
    height: 32px;
    padding: 0 12px;
    border: 1px solid transparent;
    border-radius: 4px;
    font-family: Inter, sans-serif;
}

.button.outlined {
    margin-bottom: 41px;
    border-color: #1967d2;
    color: #1967d2;
    font-weight: 500;
}

.button.primary {
    background-color: #0b66e4;
    color: #fff;
}

.actions {
    display: flex;
    gap: 8px;
    padding-left: 24px;
}

/* taskbar */
.taskbar {
    display: flex;
    align-items: center;
    justify-content: space-between;
    height: 47px;
    padding: 0 17px 0 8px;
    border-top: 1px solid #bdbdbd;
    background-color: #eee;
    font-family: "Noto Sans", sans-serif;
    font-size: 12px;
    color: #222;
}

.apps,
.tray,
.tray-icons {
    display: flex;
    align-items: center;
}

.apps button {
    width: 44px;
    height: 38px;
}

.apps .running {
    width: 36px;
    margin: 0 4px;
    border-radius: 4px;
    background: linear-gradient(#1976c5, #1976c5) center bottom / 16px 3px no-repeat #fbfbfb;
}

.tray {
    gap: 16px;
}

.tray-icons {
    gap: 8px;
}

.clock {
    line-height: 16px;
    text-align: right;
}
```
